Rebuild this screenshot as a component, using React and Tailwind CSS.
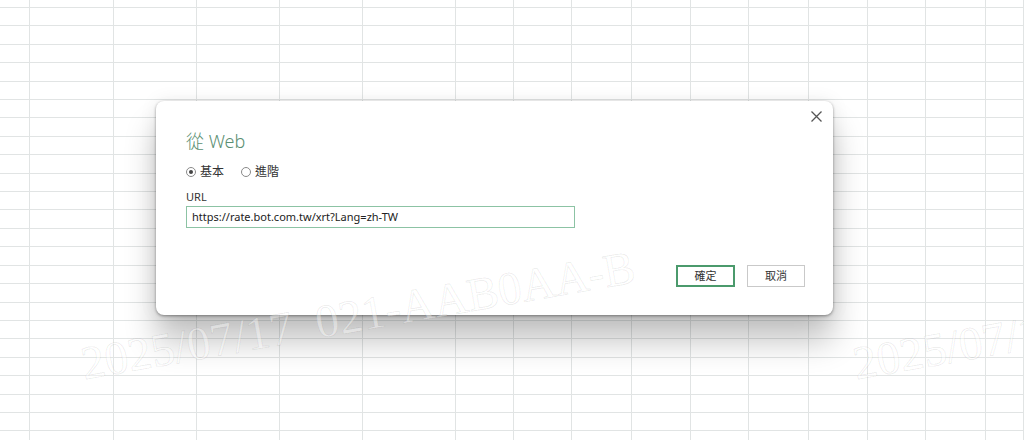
const colWidths = [30, 84, 83, 83, 83, 93, 58, 58, 60, 59, 58, 60, 59, 58, 60, 38];
const rowCount = 25;

function SheetGrid() {
  const cells = [];
  for (let r = 0; r < rowCount; r++) {
    for (let c = 0; c < colWidths.length; c++) {
      cells.push(<div key={r + "-" + c} className="border-r border-b border-[#e1e4e4]" />);
    }
  }
  return (
    <div className="grid h-full grid-cols-[30px_84px_83px_83px_83px_93px_58px_58px_60px_59px_58px_60px_59px_58px_60px_38px] grid-rows-[8px_repeat(24,18.42px)]">
      {cells}
    </div>
  );
}

function Radio({ checked, label }) {
  return (
    <label className="flex items-center gap-[4px]">
      <span className="flex h-[10px] w-[10px] items-center justify-center rounded-full border border-[#8a8a8a] bg-white">
        {checked && <span className="h-[4px] w-[4px] rounded-full bg-[#444]" />}
      </span>
      <span className="text-[12px] text-[#333]">{label}</span>
    </label>
  );
}

function Watermark({ className }) {
  return (
    <div
      className={`pointer-events-none absolute w-[580px] whitespace-pre text-center text-[47px] leading-none rotate-[-10deg] text-white/40 [-webkit-text-stroke:1px_rgba(0,0,0,0.075)] ${className}`}
      style={{ fontFamily: '"Liberation Serif", serif' }}
    >
      2025/07/17  021-AAB0AA-B
    </div>
  );
}

export default function App() {
  return (
    <div
      className="relative h-[440px] w-[1024px] overflow-hidden bg-white"
      style={{ fontFamily: '"Noto Sans", "Noto Sans CJK TC", sans-serif' }}
    >
      <div className="absolute inset-0">
        <SheetGrid />
      </div>

      {/* dialog */}
      <div className="absolute left-[156px] top-[101px] flex h-[214px] w-[677px] flex-col rounded-[8px] bg-white pl-[30px] pr-[28px] pt-[28px] shadow-[0_1px_3px_rgba(0,0,0,0.4),0_0_18px_rgba(0,0,0,0.08),0_26px_32px_rgba(0,0,0,0.24)]">
        <button className="absolute right-[10px] top-[8px] flex h-[14px] w-[14px] items-center justify-center text-[#555]">
          <svg width="11" height="11" viewBox="0 0 11 11" fill="none" stroke="currentColor" strokeWidth="1.3">
            <path d="M0.5 0.5L10.5 10.5M10.5 0.5L0.5 10.5" />
          </svg>
        </button>

        <h1 className="text-[18px] font-light leading-[24px] text-[#5c8f73]">從 Web</h1>

        <div className="mt-[10px] flex items-center gap-[17px]">
          <Radio checked label="基本" />
          <Radio label="進階" />
        </div>

        <div className="mt-[9px] text-[11px] leading-[14px] text-[#333]">URL</div>
        <div className="mt-[2px] flex h-[22px] w-[389px] items-center border border-[#8cc3a4] px-[5px] text-[11px] text-[#222]">
          https://rate.bot.com.tw/xrt?Lang=zh-TW
        </div>

        <div className="mt-auto mb-[28px] flex justify-end gap-[12px]">
          <button className="h-[22px] w-[59px] border-2 border-[#4b9a6c] text-[11px] text-[#333]">確定</button>
          <button className="h-[22px] w-[58px] border border-[#c9c9c9] text-[11px] text-[#333]">取消</button>
        </div>
      </div>

      <Watermark className="left-[68px] top-[292px]" />
      <Watermark className="left-[840px] top-[292px]" />
    </div>
  );
}
